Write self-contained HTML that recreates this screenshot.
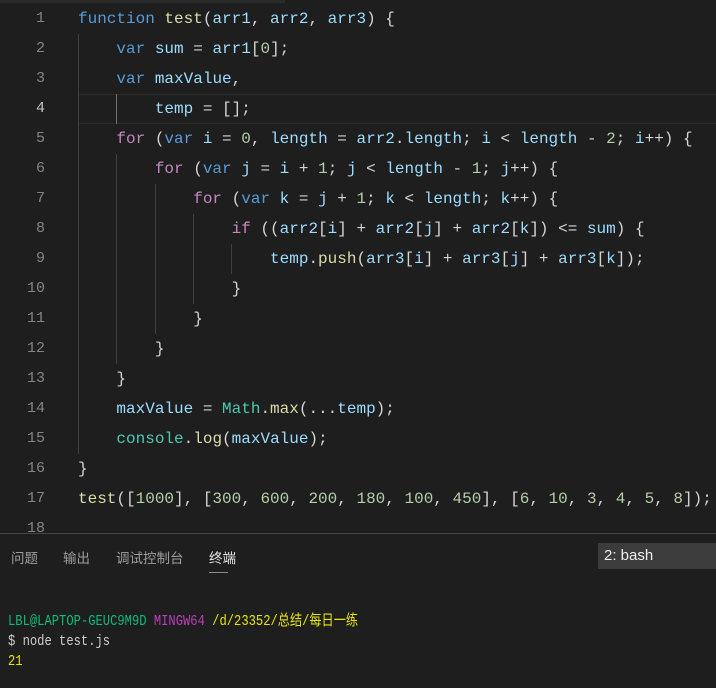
<!DOCTYPE html><html><head><meta charset="utf-8"><style>
body{margin:0;width:716px;height:687px;background:#1e1e1e;overflow:hidden;position:relative;font-family:"Liberation Mono",monospace}
.ln{position:absolute;left:0;width:45px;text-align:right;color:#858585;font-size:15px;line-height:30px}
.c{position:absolute;left:78px;font-size:16px;line-height:30px;color:#d4d4d4;white-space:pre}
.g{position:absolute;width:1px;background:#404040}
.k{color:#569cd6}.p{color:#c586c0}.v{color:#9cdcfe}.f{color:#dcdcaa}.n{color:#b5cea8}.t{color:#4ec9b0}
.tab{position:absolute;top:547px;font-family:"Liberation Sans","Noto Sans CJK SC",sans-serif;font-size:13.5px;color:#9d9d9d}
.term{position:absolute;left:8px;font-size:15px;line-height:20px;white-space:pre;font-family:"Liberation Mono","Noto Sans CJK SC",monospace;transform:scaleX(0.81);transform-origin:0 0}
</style></head><body>
<div style="position:absolute;left:0;top:0;width:285px;height:3px;background:#2a2a2a"></div>
<div style="position:absolute;left:78px;top:94px;width:638px;height:28px;border:1px solid #2c2c2c;border-right:none"></div>
<div class="g" style="left:78px;top:34px;height:420px"></div>
<div class="g" style="left:116px;top:94px;height:30px;background:#707070"></div>
<div class="g" style="left:116px;top:154px;height:210px"></div>
<div class="g" style="left:155px;top:184px;height:150px"></div>
<div class="g" style="left:193px;top:214px;height:90px"></div>
<div class="g" style="left:231px;top:244px;height:30px"></div>
<div class="ln" style="top:4px">1</div><div class="c" style="top:4px"><span class="k">function</span> <span class="f">test</span>(<span class="v">arr1</span>, <span class="v">arr2</span>, <span class="v">arr3</span>) {</div>
<div class="ln" style="top:34px">2</div><div class="c" style="top:34px">    <span class="k">var</span> <span class="v">sum</span> = <span class="v">arr1</span>[<span class="n">0</span>];</div>
<div class="ln" style="top:64px">3</div><div class="c" style="top:64px">    <span class="k">var</span> <span class="v">maxValue</span>,</div>
<div class="ln" style="top:94px;color:#c6c6c6">4</div><div class="c" style="top:94px">        <span class="v">temp</span> = [];</div>
<div class="ln" style="top:124px">5</div><div class="c" style="top:124px">    <span class="p">for</span> (<span class="k">var</span> <span class="v">i</span> = <span class="n">0</span>, <span class="v">length</span> = <span class="v">arr2</span>.<span class="v">length</span>; <span class="v">i</span> &lt; <span class="v">length</span> - <span class="n">2</span>; <span class="v">i</span>++) {</div>
<div class="ln" style="top:154px">6</div><div class="c" style="top:154px">        <span class="p">for</span> (<span class="k">var</span> <span class="v">j</span> = <span class="v">i</span> + <span class="n">1</span>; <span class="v">j</span> &lt; <span class="v">length</span> - <span class="n">1</span>; <span class="v">j</span>++) {</div>
<div class="ln" style="top:184px">7</div><div class="c" style="top:184px">            <span class="p">for</span> (<span class="k">var</span> <span class="v">k</span> = <span class="v">j</span> + <span class="n">1</span>; <span class="v">k</span> &lt; <span class="v">length</span>; <span class="v">k</span>++) {</div>
<div class="ln" style="top:214px">8</div><div class="c" style="top:214px">                <span class="p">if</span> ((<span class="v">arr2</span>[<span class="v">i</span>] + <span class="v">arr2</span>[<span class="v">j</span>] + <span class="v">arr2</span>[<span class="v">k</span>]) &lt;= <span class="v">sum</span>) {</div>
<div class="ln" style="top:244px">9</div><div class="c" style="top:244px">                    <span class="v">temp</span>.<span class="f">push</span>(<span class="v">arr3</span>[<span class="v">i</span>] + <span class="v">arr3</span>[<span class="v">j</span>] + <span class="v">arr3</span>[<span class="v">k</span>]);</div>
<div class="ln" style="top:274px">10</div><div class="c" style="top:274px">                }</div>
<div class="ln" style="top:304px">11</div><div class="c" style="top:304px">            }</div>
<div class="ln" style="top:334px">12</div><div class="c" style="top:334px">        }</div>
<div class="ln" style="top:364px">13</div><div class="c" style="top:364px">    }</div>
<div class="ln" style="top:394px">14</div><div class="c" style="top:394px">    <span class="v">maxValue</span> = <span class="t">Math</span>.<span class="f">max</span>(...<span class="v">temp</span>);</div>
<div class="ln" style="top:424px">15</div><div class="c" style="top:424px">    <span class="t">console</span>.<span class="f">log</span>(<span class="v">maxValue</span>);</div>
<div class="ln" style="top:454px">16</div><div class="c" style="top:454px">}</div>
<div class="ln" style="top:484px">17</div><div class="c" style="top:484px"><span class="f">test</span>([<span class="n">1000</span>], [<span class="n">300</span>, <span class="n">600</span>, <span class="n">200</span>, <span class="n">180</span>, <span class="n">100</span>, <span class="n">450</span>], [<span class="n">6</span>, <span class="n">10</span>, <span class="n">3</span>, <span class="n">4</span>, <span class="n">5</span>, <span class="n">8</span>]);</div>
<div class="ln" style="top:514px">18</div>
<div style="position:absolute;left:0;top:533px;width:716px;height:154px;background:#1e1e1e;border-top:1px solid #454545"></div>
<div class="tab" style="left:11px">问题</div>
<div class="tab" style="left:63px">输出</div>
<div class="tab" style="left:116px">调试控制台</div>
<div class="tab" style="left:209px;color:#e7e7e7">终端</div>
<div style="position:absolute;left:209px;top:572px;width:19px;height:1px;background:#8a8a8a"></div>
<div style="position:absolute;left:598px;top:543px;width:118px;height:26px;background:#3c3c3c;color:#f0f0f0;font-family:'Liberation Sans',sans-serif;font-size:15px;line-height:26px;padding-left:6px;box-sizing:border-box">2: bash</div>
<div class="term" style="top:612px"><span style="color:#0dbc79">LBL@LAPTOP-GEUC9M9D</span> <span style="color:#bc3fbc">MINGW64</span> <span style="color:#e5e510">/d/23352/总结/每日一练</span></div>
<div class="term" style="top:632px;color:#cccccc">$ node test.js</div>
<div class="term" style="top:652px;color:#e5e510">21</div>
</body></html>
